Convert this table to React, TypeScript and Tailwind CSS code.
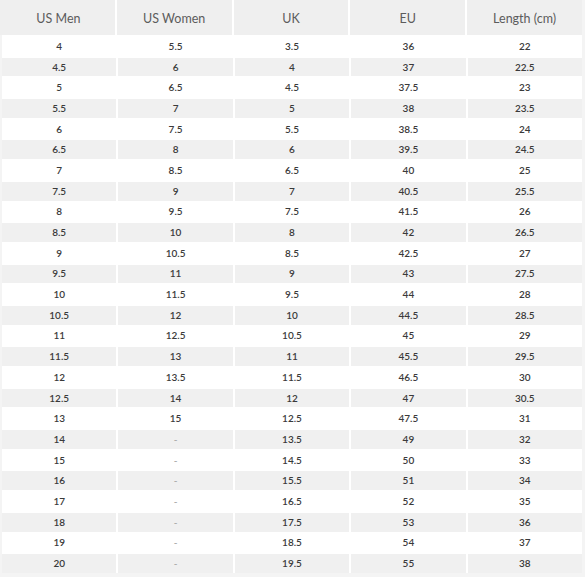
const men = ['4', '4.5', '5', '5.5', '6', '6.5', '7', '7.5', '8', '8.5', '9', '9.5', '10', '10.5', '11', '11.5', '12', '12.5', '13', '14', '15', '16', '17', '18', '19', '20'];
const women = ['5.5', '6', '6.5', '7', '7.5', '8', '8.5', '9', '9.5', '10', '10.5', '11', '11.5', '12', '12.5', '13', '13.5', '14', '15', '-', '-', '-', '-', '-', '-', '-'];
const uk = ['3.5', '4', '4.5', '5', '5.5', '6', '6.5', '7', '7.5', '8', '8.5', '9', '9.5', '10', '10.5', '11', '11.5', '12', '12.5', '13.5', '14.5', '15.5', '16.5', '17.5', '18.5', '19.5'];
const eu = ['36', '37', '37.5', '38', '38.5', '39.5', '40', '40.5', '41.5', '42', '42.5', '43', '44', '44.5', '45', '45.5', '46.5', '47', '47.5', '49', '50', '51', '52', '53', '54', '55'];
const length = ['22', '22.5', '23', '23.5', '24', '24.5', '25', '25.5', '26', '26.5', '27', '27.5', '28', '28.5', '29', '29.5', '30', '30.5', '31', '32', '33', '34', '35', '36', '37', '38'];

const headers = ['US Men', 'US Women', 'UK', 'EU', 'Length (cm)'];

export default function App() {
  const rows = men.map((m, i) => [m, women[i], uk[i], eu[i], length[i]]);

  return (
    <div
      className="w-[585px] h-[577px] bg-[#f4f4f4] pl-[2px] pr-[3px]"
      style={{ fontFamily: 'Lato, "Open Sans", sans-serif' }}
    >
      {/* Header */}
      <div className="grid grid-cols-5 gap-[2px] bg-white -ml-[2px]">
        {headers.map((h, i) => (
          <div
            key={h}
            className={`h-[35px] pt-[3px] bg-[#efefef] flex items-center justify-center text-[12.5px] text-[#5c5c5c] ${i === 0 ? 'pl-[2px]' : ''}`}
          >
            {h}
          </div>
        ))}
      </div>

      {/* Body */}
      <div className="bg-white flex flex-col gap-[2px] pt-[2px]">
        {rows.map((r, i) => (
          <div key={i} className="grid grid-cols-5 gap-[2px]">
            {r.map((v, j) => (
              <div
                key={j}
                className={`h-[18.7px] flex items-center justify-center text-[10px] font-semibold ${
                  i % 2 === 1 ? 'bg-[#f0f0f0]' : 'bg-white'
                } ${v === '-' ? 'text-[#aaaaaa] font-normal' : 'text-[#3a3a3a]'}`}
              >
                {v}
              </div>
            ))}
          </div>
        ))}
      </div>
    </div>
  );
}
